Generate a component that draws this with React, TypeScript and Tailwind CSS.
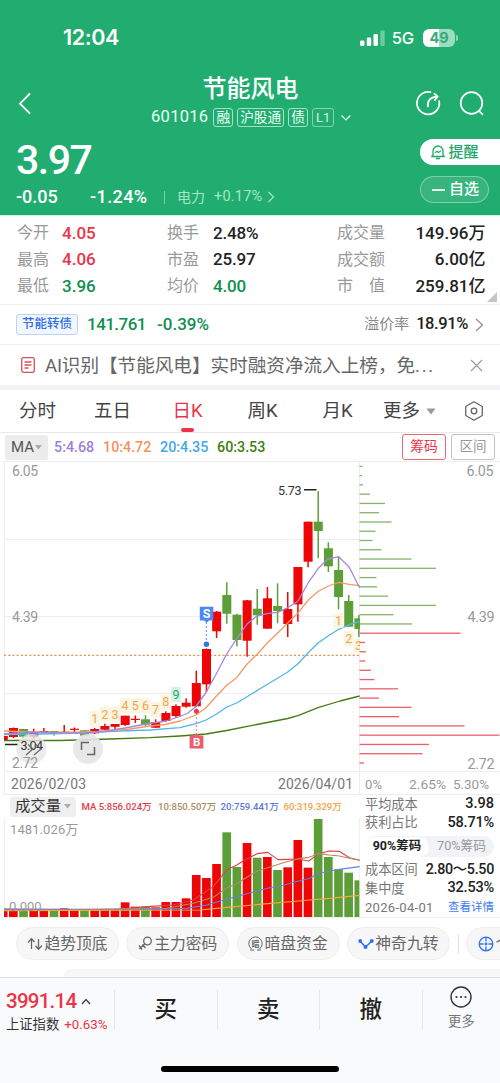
import clsx from "clsx";

type Candle = [top: number, bottom: number, high: number, low: number, up: 0 | 1];

const RED = "#ee0505";
const GREEN = "#5c9f38";

// body top, body bottom, high, low, rising
const candles: Candle[] = [
  [736, 740.5, 736, 741, 1],
  [728, 737, 727.5, 738, 1],
  [729, 736.7, 729, 738, 0],
  [733, 736.7, 728.7, 738.7, 1],
  [731, 732.3, 728, 732.3, 1],
  [731, 733.7, 731, 735.6, 0],
  [731.7, 732.8, 725, 734, 1],
  [728.7, 729.9, 727.5, 732, 1],
  [730.3, 735.7, 730, 736.5, 0],
  [729, 733.3, 728, 734, 1],
  [726, 729.7, 723.7, 730, 1],
  [724, 726.8, 724, 729.3, 1],
  [715.7, 725, 715.7, 726, 1],
  [718.8, 720, 715.5, 723, 1],
  [719.3, 724.7, 715.3, 726.7, 0],
  [722, 727.7, 719.3, 728, 1],
  [713, 721, 711.3, 722, 1],
  [706, 716, 704.3, 718, 1],
  [702.7, 706.7, 698.3, 707.7, 1],
  [683, 706.3, 670.7, 707, 1],
  [649, 684.3, 648.5, 692, 1],
  [611.7, 631.3, 611, 638, 1],
  [595, 613.7, 582.3, 623.7, 0],
  [614.7, 640, 613.7, 646.3, 0],
  [600.3, 640.7, 600, 656.7, 1],
  [608.7, 615.3, 589, 624.7, 0],
  [598.3, 628.7, 587, 628.7, 1],
  [606, 611, 583.3, 623.3, 0],
  [609, 624, 592, 637, 1],
  [567, 604.3, 567, 621.7, 1],
  [521.7, 561.7, 521.7, 567.3, 1],
  [521.7, 531, 491.3, 558, 0],
  [548.3, 566.3, 542.3, 572, 0],
  [570, 597, 556.7, 609.3, 0],
  [601, 626.7, 595, 626.7, 0],
  [618.3, 629, 615, 637, 0],
];

const volumeTops = [
  358, 357, 362, 360, 360, 362, 355, 358, 363, 360, 357, 360, 337, 350, 350, 352, 336, 336, 325,
  255, 264, 222, 127, 231, 159, 203, 201, 240, 232, 150, 233, 87, 201, 238, 248, 271,
];

const chipWidths = [
  3, 2.5, 3.5, 10.5, 25.5, 19.5, 32, 16, 13, 22, 52, 76.5, 17, 17.5, 28.5, 76.5, 34, 52.5, 101, 5.5,
  6.5, 6, 11.5, 15, 38.5, 19.5, 52, 39.5, 105, 140, 69.5, 63, 4.5,
];

const maLines = [
  {
    color: "#447c12",
    points:
      "4,740.5 60,740.5 110,739 150,737.7 180,736 206,734 226.7,730.5 257,724.5 287.7,718.5 298,715.7 318,707.7 340,701 359.7,696",
  },
  {
    color: "#52b5ec",
    points:
      "4,734.5 40,734 80,733 120,731 150,730 180,727.7 196,723.7 206,720 216.7,714 226.7,707 236.7,703 247,696.7 267,684.5 287.7,672 298,663.7 308,653 318,643 328,636 338.7,629.3 349.3,624.7 359.7,621.7",
  },
  {
    color: "#f49a62",
    points:
      "4,731 30,732 60,732.5 100,731.5 130,729 150,726 165,724.5 180,721 196,715 206,707.7 216.7,695.7 226.7,685.3 236.7,677.7 247,664 257.3,654 267.3,643 277.7,633 287.7,623 298.3,612.7 308.3,600 318.3,591.3 328.3,586 338.7,582.3 349.3,584.3 359.7,585.7",
  },
  {
    color: "#a389dc",
    points:
      "4,734 30,732 60,733 84,733 105,731 125,728 146,724 166,721 180,716.5 188,713 196,706.5 206.3,692 216.7,673 226.7,654 236.7,638.7 247,624 257,616 267,613.7 277.7,612.3 287.7,607.7 298,601 308.3,582.7 318.3,568.3 328,559 338.7,556.7 349.3,567.3 359.7,588",
  },
];

const volumeLines = [
  {
    color: "#d8414c",
    points:
      "12,358 180,358 330,360 440,350 520,345 580,330 640,290 680,240 710,225 740,207 772,191 803,187 834,209 865,208 895,207 926,213 957,191 987,183 1018,184 1048,203 1079,211",
  },
  {
    color: "#b58c60",
    points:
      "12,360 500,355 580,340 640,322 680,294 710,281 740,262 772,243 803,233 850,218 895,206 926,202 957,191 987,195 1018,198 1048,205 1079,211",
  },
  {
    color: "#6481e0",
    points:
      "12,357 350,360 560,355 620,345 680,328 740,311 803,295 850,286 895,273 926,266 957,250 987,244 1018,238 1079,230",
  },
  {
    color: "#f5a83d",
    points: "12,362 600,360 680,352 803,341 895,333 987,325 1079,316",
  },
];

// nine-turn counters above / below the candles
const marks: [string, number, number][] = [
  ["1", 94.7, 718.3],
  ["2", 104.8, 714.3],
  ["3", 115, 714.3],
  ["4", 125, 705.7],
  ["5", 135.3, 705.7],
  ["6", 145.4, 705.7],
  ["7", 155.6, 709.7],
  ["8", 165.7, 702],
  ["9", 176, 694.5],
  ["1", 338.5, 620.5],
  ["2", 348.7, 638.3],
  ["3", 358.8, 646],
];

const stats = [
  ["今开", "4.05", "text-[#ea3447]", "换手", "2.48%", "text-[#222]", "成交量", "149.96万"],
  ["最高", "4.06", "text-[#ea3447]", "市盈", "25.97", "text-[#222]", "成交额", "6.00亿"],
  ["最低", "3.96", "text-[#0f8f4f]", "均价", "4.00", "text-[#0f8f4f]", "市　值", "259.81亿"],
];

const candleX = (i: number) => 3.2 + 10.16 * i;

const StatusBar = () => (
  <div className="flex h-[75px] items-center pl-[63px] pr-[42px] pt-px font-['Inter',sans-serif]">
    <span className="text-[21.5px] font-semibold leading-none tracking-[-0.4px]">12:04</span>
    <svg className="ml-auto" width="26" height="17" viewBox="0 0 26 17" fill="#fff">
      <rect x="0" y="10.5" width="4.4" height="5.5" rx="1.2" />
      <rect x="6.8" y="7.5" width="4.4" height="8.5" rx="1.2" />
      <rect x="13.5" y="4" width="4.4" height="12" rx="1.2" />
      <rect x="20.3" y="0.5" width="4.4" height="15.5" rx="1.2" opacity="0.35" />
    </svg>
    <span className="ml-[6px] text-[16.5px] font-medium leading-none tracking-[-0.2px]">5G</span>
    <div className="ml-[9px] flex h-[18px] w-[32px] items-center justify-center rounded-[6px] bg-[linear-gradient(90deg,#fff_50%,#9cdcc0_50%)] text-[14.5px] font-bold leading-none text-[#3aa978]">
      49
    </div>
    <span className="ml-[1px] h-[6px] w-[2px] rounded-r-full bg-[#8bd6b5]" />
  </div>
);

const Tag = ({ children, dim }: { children: string; dim?: boolean }) => (
  <span
    className={clsx(
      "flex h-[19px] items-center rounded-[3px] border px-[2px] leading-none",
      dim ? "border-white/45 px-[3px] text-[13px] text-white/80" : "border-white/60 text-[13.7px]"
    )}
  >
    {children}
  </span>
);

const Header = () => (
  <div className="h-[216px] border-b border-[#c3f7e2] bg-[#22ad70] text-white">
    <StatusBar />
    <div className="flex h-[58px] pl-[18px] pr-[15px]">
      <svg className="mt-[17px]" width="14" height="23" viewBox="0 0 14 23" fill="none" stroke="#fff" strokeWidth="1.8">
        <path d="M12 1.5 2 11.7l10 10" />
      </svg>
      <div className="ml-[119px] flex w-[202px] flex-col items-center">
        <div className="mr-[3px] mt-[2px] text-[24px] font-medium leading-[25px]">节能风电</div>
        <div className="mt-[6px] flex w-full items-center gap-[4px] whitespace-nowrap text-[#e8fff5]">
          <span className="mr-px text-[16.5px] leading-none tracking-[0.3px]">601016</span>
          <Tag>融</Tag>
          <Tag>沪股通</Tag>
          <Tag>债</Tag>
          <Tag dim>L1</Tag>
          <svg className="ml-[2px] shrink-0" width="12" height="8" viewBox="0 0 12 8" fill="none" stroke="#e8fff5" strokeWidth="1.2">
            <path d="m1.5 1.5 4.4 4.4 4.4-4.4" />
          </svg>
        </div>
      </div>
      <svg className="ml-auto mt-[15px]" width="70" height="27" viewBox="0 0 70 27" fill="none" stroke="#fff" strokeWidth="1.7" strokeLinecap="round">
        <path d="M15.5 2.2A11.2 11.2 0 1 0 24.2 11.2" />
        <path d="M13 16.5c-.9-5 1.800-9.300 9.300-9.800M19.300 3.700l3.400 3-2.900 3.400" strokeLinejoin="round" />
        <circle cx="56.500" cy="13" r="10.800" />
        <path d="m64.200 21 3.300 3.400" />
      </svg>
    </div>
    <div className="flex h-[82px] justify-between">
      <div className="flex flex-col pl-4">
        <span className="mt-[7px] text-[41px] font-medium leading-[40px] tracking-[-1.5px]">3.97</span>
        <div className="mt-[7px] flex h-[20px] items-center leading-none">
          <span className="w-[74px] text-[18px] font-medium">-0.05</span>
          <span className="w-[74px] text-[18px] font-medium tracking-[0.4px]">-1.24%</span>
          <span className="h-[13px] w-px bg-white/40" />
          <span className="ml-[12px] text-[14px] text-[#a4e6c8]">电力</span>
          <span className="ml-[9px] text-[14.5px] tracking-[0.2px] text-[#a4e6c8]">+0.17%</span>
          <svg className="ml-[5px]" width="8" height="12" viewBox="0 0 8 12" fill="none" stroke="#a4e6c8" strokeWidth="1.2">
            <path d="m1.500 1 5 5-5 5" />
          </svg>
        </div>
      </div>
      <div className="flex w-[80px] flex-col pt-[6px]">
        <div className="flex h-[26px] items-center rounded-l-full bg-white pl-[11px] text-[15px] font-medium text-[#22a76c]">
          <svg width="14" height="16" viewBox="0 0 14 16" fill="none" stroke="#22a76c" strokeWidth="1.300" strokeLinejoin="round">
            <path d="M2 11V7a5 5 0 0 1 10 0v4l1.300 1.500H.7zM5 14.500h4" />
            <path d="m4 8.800 2-1.500 1.500 1.200L10 6.800" strokeWidth="1.100" />
          </svg>
          <span className="ml-[3.500px] leading-none">提醒</span>
        </div>
        <div className="mt-[11px] flex h-[27px] w-[69px] items-center rounded-full border border-white/35 bg-white/10 pl-[11px] text-[15px] font-medium">
          <span className="h-[2px] w-[13px] bg-white/90" />
          <span className="ml-[4px] leading-none">自选</span>
        </div>
      </div>
    </div>
  </div>
);

const Stats = () => (
  <div className="relative flex h-[89px] flex-col border-b border-[#efefef] pl-[17px] pr-[14.500px] pt-[4px]">
    {stats.map(([a, av, ac, b, bv, bc, c, cv]) => (
      <div key={a} className="flex h-[26.600px] items-center text-[16px] leading-none text-[#999]">
        <span className="w-[45px]">{a}</span>
        <span className={clsx("w-[105px] text-[17px] font-medium", ac)}>{av}</span>
        <span className="w-[46px]">{b}</span>
        <span className={clsx("w-[124px] text-[17px] font-medium tracking-[-0.200px]", bc)}>{bv}</span>
        <span>{c}</span>
        <span className="ml-auto text-[17px] font-medium text-[#222]">{cv}</span>
      </div>
    ))}
    <svg className="absolute bottom-[2px] right-[3px]" width="10" height="10" viewBox="0 0 10 10">
      <path d="M10 0v10H0z" fill="#c4c4c4" />
    </svg>
  </div>
);

const BondRow = () => (
  <div className="flex h-[40px] items-center border-b border-[#f2f2f2] pl-4 pr-[16px] leading-none">
    <span className="flex h-[21px] items-center rounded-[3px] border border-[#bdd3fb] bg-[#f2f7ff] px-[5px] text-[12.500px] font-medium text-[#2f6fe4]">
      节能转债
    </span>
    <span className="ml-[9px] w-[70px] text-[17px] font-medium tracking-[-0.550px] text-[#0f8f4f]">141.761</span>
    <span className="text-[17px] font-medium text-[#0f8f4f]">-0.39%</span>
    <span className="ml-auto text-[15px] text-[#888]">溢价率</span>
    <span className="ml-[7px] text-[16.500px] font-medium tracking-[-0.400px] text-[#222]">18.91%</span>
    <svg className="ml-[7px]" width="9" height="14" viewBox="0 0 9 14" fill="none" stroke="#888" strokeWidth="1.100">
      <path d="m1 1 6.500 6L1 13" />
    </svg>
  </div>
);

const News = () => (
  <div className="flex h-[40px] items-center whitespace-nowrap pl-[21px] pr-[17px]">
    <svg width="14" height="16" viewBox="0 0 14 16" fill="none" stroke="#d9505c" strokeWidth="1.300">
      <rect x="0.700" y="0.700" width="12.600" height="14.600" rx="2" />
      <path d="M3.500 5h7M3.500 8h7M3.500 11h4" />
    </svg>
    <span className="ml-[10px] pt-[2px] text-[18.600px] leading-none text-[#666]">
      <span className="tracking-[-0.200px]">AI</span>识别【节能风电】实时融资净流入上榜，免<span className="tracking-[1.700px]">...</span>
    </span>
    <svg className="ml-auto" width="13" height="13" viewBox="0 0 13 13" stroke="#999" strokeWidth="1.100">
      <path d="m1 1 11 11M12 1 1 12" />
    </svg>
  </div>
);

const Tabs = () => (
  <div className="flex h-[43px] items-center border-b border-[#eaeaea] text-[18.500px] leading-none text-[#444]">
    {["分时", "五日", "日K", "周K", "月K"].map((tab) => (
      <div
        key={tab}
        className={clsx("relative flex h-full w-[75px] items-center justify-center pt-px", tab === "日K" && "text-[#ea3447]")}
      >
        {tab}
        {tab === "日K" && <span className="absolute bottom-0 h-[4px] w-[13px] rounded-full bg-[#ea3447]" />}
      </div>
    ))}
    <span className="ml-[8px] pt-px">更多</span>
    <svg className="ml-[6px]" width="10" height="7" viewBox="0 0 10 7">
      <path d="M.5.500h9L5 6.500z" fill="#999" />
    </svg>
    <svg className="ml-[28px]" width="20" height="22" viewBox="0 0 20 22" fill="none" stroke="#666" strokeWidth="1.300" strokeLinejoin="round">
      <path d="m10 1.800 8.300 4.700v9L10 20.200l-8.300-4.700v-9z" />
      <circle cx="10" cy="11" r="2.800" />
    </svg>
  </div>
);

const MaRow = () => (
  <div className="flex h-[28px] items-center pl-[5px] pr-[5px] text-[14.300px] font-medium leading-none">
    <div className="flex h-[25px] w-[43px] items-center justify-center gap-px rounded-[2px] bg-[#ececec] text-[15px] font-normal text-[#555]">
      MA
      <svg width="7" height="5" viewBox="0 0 7 5">
        <path d="M0 0h7L3.500 4.500z" fill="#aaa" />
      </svg>
    </div>
    <span className="ml-[6px] w-[49px] text-[#9d80da]">5:4.68</span>
    <span className="w-[57px] text-[#f2945c]">10:4.72</span>
    <span className="w-[57px] text-[#43a9e4]">20:4.35</span>
    <span className="text-[#3e8010]">60:3.53</span>
    <span className="ml-auto flex h-[26px] w-[44px] items-center justify-center rounded-[3px] border border-[#ee6674] text-[13.800px] font-normal text-[#ea3447]">
      筹码
    </span>
    <span className="ml-[5px] flex h-[26px] w-[44px] items-center justify-center rounded-[3px] border border-[#c2c2c2] text-[13.500px] font-normal text-[#999]">
      区间
    </span>
  </div>
);

const KChart = () => (
  <svg className="block" width="500" height="334" viewBox="0 461 500 334" fontSize="14" fill="#999">
    <defs>
      <clipPath id="plot">
        <rect x="4" y="461" width="356" height="334" />
      </clipPath>
    </defs>
    <g stroke="#ededed">
      <path d="M4 461.500H500M4 539.500H359M4 616.500H359M4 693.500H359M4 771.500H500M4 794.500H500" />
      <path d="M4.500 461V795M359.500 461V795" />
    </g>
    <path d="M4 655.300H359" stroke="#d99a5c" strokeWidth="1.200" strokeDasharray="2.200 2" />

    <g clipPath="url(#plot)">
      {candles.map(([top, bottom, high, low, up], i) => (
        <g key={i} fill={up ? RED : GREEN}>
          <rect x={candleX(i) - 0.7} y={high} width="1.500" height={low - high} />
          <rect x={candleX(i) - 4.400} y={top} width="9" height={bottom - top} />
        </g>
      ))}
      {maLines.map((line) => (
        <polyline key={line.color} points={line.points} fill="none" stroke={line.color} strokeWidth="1.300" strokeLinejoin="round" />
      ))}
      {marks.map(([n, x, y], i) => (
        <g key={i}>
          <rect x={x - 5} y={y - 7.500} width="10" height="15" fill={n === "9" ? "#cdf0df" : "#fdf1dc"} opacity="0.800" />
          <text x={x} y={y + 4.300} fontSize="12.500" textAnchor="middle" fill={n === "9" ? "#1fa56a" : "#f0a648"}>
            {n}
          </text>
        </g>
      ))}
    </g>

    {/* sell marker */}
    <path d="M206.300 622V641" stroke="#4f8fee" strokeDasharray="2 2" />
    <path d="M199.800 606.800h13.500V620.500h-4.200l-2.500 2.200-2.500-2.200h-4.300z" fill="#4a8af4" />
    <circle cx="206.400" cy="644.300" r="2.700" fill="#2b78e4" />
    <text x="206.500" y="618.200" fontSize="12.500" fontWeight="700" textAnchor="middle" fill="#fff">S</text>

    {/* buy marker */}
    <path d="M196.300 713V735" stroke="#e884a6" strokeDasharray="2 2" />
    <path d="M189.600 735.500h4.300l2.500-2.500 2.500 2.500h4.500v13h-13.800z" fill="#ea5d69" />
    <circle cx="196.400" cy="711.300" r="2.500" fill="#ea3b47" />
    <text x="196.600" y="746.300" fontSize="11.500" fontWeight="700" textAnchor="middle" fill="#fff">B</text>

    <g fill="#333" fontSize="12.500">
      <text x="278" y="494.500" textLength="23.500">5.73</text>
      <path d="M304 489.700H316.500M5 744.500H18" stroke="#222" strokeWidth="1.400" />
      <circle cx="31.500" cy="749" r="15" fill="#e6e6e6" opacity="0.800" />
      <text x="20.500" y="749.500" textLength="22.500">3.04</text>
      <path d="M28 744.500l5 4.500-7 6M36 744.500l5 4.500-7 6" fill="none" stroke="#666" strokeWidth="1.200" />
      <circle cx="88" cy="749" r="15" fill="#e6e6e6" opacity="0.900" />
      <path d="M81.500 750V742.500H89M94.500 747V754.500H87" fill="none" stroke="#666" strokeWidth="1.500" />
    </g>

    {chipWidths.map((w, i) => (
      <rect key={i} x="359.500" y={465.700 + i * 9.270} width={w} height="1.300" fill={i < 18 ? "#84b568" : "#ec5f6a"} />
    ))}

    <text x="12" y="476.300" textLength="26">6.05</text>
    <text x="12" y="622.300" textLength="26">4.39</text>
    <text x="12" y="768.300" textLength="26">2.72</text>
    <g fontSize="14.300">
      <text x="466.500" y="476.300" textLength="27">6.05</text>
      <text x="467.500" y="622.300" textLength="27">4.39</text>
      <text x="467.500" y="768.500" textLength="27">2.72</text>
    </g>
    <g fill="#777">
      <text x="11" y="788.500" textLength="75">2026/02/03</text>
      <text x="278" y="788.500" textLength="75">2026/04/01</text>
    </g>
    <g fontSize="13.500">
      <text x="365" y="788.500" textLength="17" lengthAdjust="spacingAndGlyphs">0%</text>
      <text x="409" y="788.500" textLength="37" lengthAdjust="spacingAndGlyphs">2.65%</text>
      <text x="453" y="788.500" textLength="36" lengthAdjust="spacingAndGlyphs">5.30%</text>
    </g>
  </svg>
);

const VolumeChart = () => (
  <div className="w-[360px]">
    <div className="flex h-[23px] items-center whitespace-nowrap pl-[10px] text-[9.600px] font-medium leading-none">
      <div className="mr-[5.500px] flex h-[20px] w-[66px] items-center justify-center gap-[3px] rounded-[3px] bg-[#efefef] text-[15.300px] font-normal text-[#333]">
        成交量
        <svg width="7" height="5" viewBox="0 0 7 5">
          <path d="M0 0h7L3.500 4.500z" fill="#aaa" />
        </svg>
      </div>
      <span className="w-[76.500px] text-[#e23c4b]">MA 5:856.024万</span>
      <span className="w-[62.500px] text-[#a98e63]">10:850.507万</span>
      <span className="w-[63px] text-[#5c79dc]">20:759.441万</span>
      <span className="text-[#f0a53f]">60:319.329万</span>
    </div>
    {/* drawn in thirds of a pixel */}
    <svg className="block" width="360" height="99" viewBox="0 84 1080 297">
      <path d="M13 84V381M1078 84V381" stroke="#ededed" strokeWidth="3" />
      {volumeTops.map((top, i) => {
        const x = Math.max(candleX(i) * 3 - 13, 12);
        return (
          <rect
            key={i}
            x={x}
            y={top}
            width={Math.min(candleX(i) * 3 + 13, 1078) - x}
            height={381 - top}
            fill={candles[i][4] ? RED : GREEN}
          />
        );
      })}
      {volumeLines.map((line) => (
        <polyline key={line.color} points={line.points} fill="none" stroke={line.color} strokeWidth="3.300" strokeLinejoin="round" />
      ))}
      <g fill="#999" fontSize="39">
        <text x="30" y="133" textLength="205">1481.026万</text>
        <text x="27" y="364" textLength="98">0.000</text>
      </g>
    </svg>
  </div>
);

const ChipPanel = () => (
  <div className="flex flex-1 flex-col pl-[5px] pr-[6px] text-[13.200px] leading-none text-[#777]">
    <div className="flex h-[18px] items-center justify-between pt-px">
      <span>平均成本</span>
      <span className="text-[14.500px] font-medium text-[#222]">3.98</span>
    </div>
    <div className="flex h-[20px] items-center justify-between">
      <span>获利占比</span>
      <span className="text-[14.500px] font-medium tracking-[-0.200px] text-[#222]">58.71%</span>
    </div>
    <div className="my-[3px] flex h-[21px] items-center rounded-full bg-[#f1f3f6] text-[12.700px]">
      <span className="flex h-[20px] w-[64px] items-center justify-center rounded-full bg-white text-[12.500px] font-bold text-[#222]">
        90%筹码
      </span>
      <span className="flex-1 text-center text-[#999]">70%筹码</span>
    </div>
    <div className="flex h-[19px] items-center justify-between whitespace-nowrap">
      <span>成本区间</span>
      <span className="text-[14.300px] font-medium tracking-[-0.300px] text-[#222]">2.80～5.50</span>
    </div>
    <div className="flex h-[19px] items-center justify-between">
      <span>集中度</span>
      <span className="text-[14.500px] font-medium tracking-[-0.200px] text-[#222]">32.53%</span>
    </div>
    <div className="flex h-[19px] items-center justify-between whitespace-nowrap">
      <span className="text-[13px] tracking-[0.300px]">2026-04-01</span>
      <span className="text-[11.500px] text-[#3f7df0]">查看详情</span>
    </div>
  </div>
);

const pill =
  "flex h-[33px] w-[103px] shrink-0 items-center justify-center gap-px whitespace-nowrap rounded-full border border-[#eeeeee] bg-[#f7f7f7]";

const Tools = () => (
  <div className="flex h-[52px] items-center gap-[7.300px] overflow-hidden border-t border-[#f1f1f1] pl-4 text-[15.800px] leading-none text-[#666]">
    <div className={pill}>
      <svg width="16" height="14" viewBox="0 0 16 14" fill="none" stroke="#666" strokeWidth="1.300">
        <path d="M4.500 12V2M1 5.500l3.500-3.700L7.500 5M11.500 2v10M8.500 8.800l3 3.400L15 8.500" />
      </svg>
      趋势顶底
    </div>
    <div className={pill}>
      <svg width="15" height="15" viewBox="0 0 15 15" fill="none" stroke="#666" strokeWidth="1.300">
        <circle cx="9.500" cy="5" r="3.800" />
        <path d="M6.800 7.800 1.500 13M1 9.500l3 4M4.500 8.500l3 3.500" />
      </svg>
      主力密码
    </div>
    <div className={pill}>
      <svg width="15" height="15" viewBox="0 0 15 15" fill="none" stroke="#666">
        <path d="M3.500 13a6.700 6.700 0 1 1 8 0M2 14h4M9 14h4" />
        <text x="7.500" y="10.500" fontSize="8" fill="#666" stroke="none" fontWeight="700" textAnchor="middle">
          暗
        </text>
      </svg>
      暗盘资金
    </div>
    <div className={pill}>
      <svg width="16" height="12" viewBox="0 0 16 12" fill="none" stroke="#2f6ff0" strokeWidth="1.500">
        <path d="m2 3 5.500 6L14 3" />
        <g fill="#2f6ff0" stroke="none">
          <circle cx="2.200" cy="3" r="1.900" />
          <circle cx="7.500" cy="9" r="2" />
          <circle cx="13.800" cy="3" r="1.900" />
        </g>
      </svg>
      神奇九转
    </div>
    <span className="ml-[1px] h-[20px] w-px shrink-0 bg-[#e3e3e3]" />
    <div className={clsx(pill, "justify-start pl-[11px]")}>
      <svg className="shrink-0" width="16" height="16" viewBox="0 0 16 16" fill="none" stroke="#2f6ff0" strokeWidth="1.300">
        <circle cx="8" cy="8" r="6.800" />
        <path d="M8 1v4.500M8 10.500V15M1 8h4.500M10.500 8H15" />
        <circle cx="8" cy="8" r="0.800" fill="#2f6ff0" />
      </svg>
      个
    </div>
  </div>
);

const BottomBar = () => (
  <div className="flex h-[106px] flex-col border-t border-[#dedfe2] bg-[#f9fafc]">
    <div className="flex h-[63px]">
      <div className="w-[114px] whitespace-nowrap pl-[6px] pt-[12px] leading-none">
        <div className="flex items-center text-[20.500px] font-medium leading-[22px] tracking-[-0.750px] text-[#ea3447]">
          3991.14
          <svg className="ml-[5px]" width="10" height="7" viewBox="0 0 10 7" fill="none" stroke="#444" strokeWidth="1.400">
            <path d="m1 6 4-4.500L9 6" />
          </svg>
        </div>
        <div className="mt-[5px] flex text-[13.300px] leading-[16px] text-[#333]">
          上证指数
          <span className="ml-[5px] text-[#ea3447]">+0.63%</span>
        </div>
      </div>
      {["买", "卖", "撤"].map((label) => (
        <div key={label} className="flex w-[102.500px] items-center text-[22.500px] font-medium text-[#222]">
          <span className="h-[40px] w-px bg-[#e6e7ea]" />
          <span className="flex-1 text-center leading-none">{label}</span>
        </div>
      ))}
      <span className="h-[40px] w-px self-center bg-[#e6e7ea]" />
      <div className="flex flex-1 flex-col items-center pt-[8px] text-[13.300px] leading-none text-[#777]">
        <svg width="22" height="22" viewBox="0 0 22 22" fill="none" stroke="#333" strokeWidth="1.400">
          <circle cx="11" cy="11" r="10" />
          <g fill="#333" stroke="none">
            <circle cx="6.500" cy="11" r="1.100" />
            <circle cx="11" cy="11" r="1.100" />
            <circle cx="15.500" cy="11" r="1.100" />
          </g>
        </svg>
        <span className="mt-[7px]">更多</span>
      </div>
    </div>
    <div className="mx-auto mt-[25px] h-[6px] w-[178px] rounded-full bg-black" />
  </div>
);

export default function App() {
  return (
    <div className="flex h-[1083px] w-[500px] flex-col overflow-hidden bg-white font-['Roboto','Noto_Sans_CJK_SC',sans-serif]">
      <Header />
      <Stats />
      <BondRow />
      <News />
      <div className="h-[5px] bg-[#f3f3f9]" />
      <Tabs />
      <MaRow />
      <KChart />
      <div className="flex h-[122px]">
        <VolumeChart />
        <ChipPanel />
      </div>
      <Tools />
      <div className="ml-[64px] h-[8px] rounded-tl-[6px] bg-[#f7f7f7]" />
      <BottomBar />
    </div>
  );
}
